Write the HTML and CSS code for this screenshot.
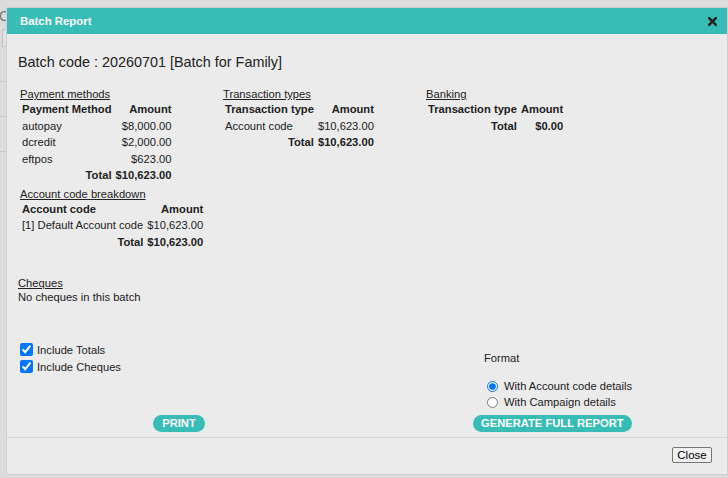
FILE: index.html
```html
<!DOCTYPE html>
<html lang="en">
<head>
  <meta charset="UTF-8" />
  <title>Batch Report</title>
  <link rel="stylesheet" href="styles.css">
</head>
<body>
  <!-- Page behind the dialog -->
  <div class="page">
    <div class="page-title">C</div>
    <div class="page-field"></div>
    <div class="page-row"></div>
    <div class="page-row"></div>
    <div class="page-row"></div>
  </div>

  <!-- Batch report dialog -->
  <div class="dialog">
    <div class="dialog-title">
      <span>Batch Report</span>
      <svg class="dialog-x" width="9" height="9" viewBox="0 0 9 9">
        <path d="M1.2 1.2 L7.8 7.8 M7.8 1.2 L1.2 7.8" stroke="#222" stroke-width="2.6" stroke-linecap="square"/>
      </svg>
    </div>

    <div class="dialog-body">
      <h3 class="batch-code">Batch code : 20260701 [Batch for Family]</h3>

      <div class="sections">
        <div class="section">
          <div class="section-title">Payment methods</div>
          <table class="report">
            <tr><th class="text">Payment Method</th><th>Amount</th></tr>
            <tr><td class="text">autopay</td><td>$8,000.00</td></tr>
            <tr><td class="text">dcredit</td><td>$2,000.00</td></tr>
            <tr><td class="text">eftpos</td><td>$623.00</td></tr>
            <tr class="total"><td>Total</td><td>$10,623.00</td></tr>
          </table>

          <div class="section-title sub">Account code breakdown</div>
          <table class="report">
            <tr><th class="text">Account code</th><th>Amount</th></tr>
            <tr><td class="text">[1] Default Account code</td><td>$10,623.00</td></tr>
            <tr class="total"><td>Total</td><td>$10,623.00</td></tr>
          </table>
        </div>

        <div class="section">
          <div class="section-title">Transaction types</div>
          <table class="report">
            <tr><th class="text">Transaction type</th><th>Amount</th></tr>
            <tr><td class="text">Account code</td><td>$10,623.00</td></tr>
            <tr class="total"><td>Total</td><td>$10,623.00</td></tr>
          </table>
        </div>

        <div class="section">
          <div class="section-title">Banking</div>
          <table class="report">
            <tr><th class="text">Transaction type</th><th>Amount</th></tr>
            <tr class="total"><td>Total</td><td>$0.00</td></tr>
          </table>
        </div>
      </div>

      <div class="cheques">
        <div class="section-title">Cheques</div>
        <div>No cheques in this batch</div>
      </div>

      <div class="options">
        <div class="options-left">
          <label class="check"><input type="checkbox" checked /> Include Totals</label>
          <label class="check"><input type="checkbox" checked /> Include Cheques</label>
        </div>
        <div class="options-right">
          <div class="format-label">Format</div>
          <label class="radio"><input type="radio" name="format" checked /> With Account code details</label>
          <label class="radio"><input type="radio" name="format" /> With Campaign details</label>
        </div>
        <button class="pill print-btn">PRINT</button>
        <button class="pill full-btn">GENERATE FULL REPORT</button>
      </div>
    </div>

    <div class="dialog-footer">
      <button class="close-btn">Close</button>
    </div>
  </div>
</body>
</html>
```

FILE: styles.css
```css
/* Global page styling */
html, body {
  margin: 0;
  padding: 0;
}

body {
  font-family: Arial, "Liberation Sans", sans-serif;
  font-size: 11.2px;
  color: #222;
  background: #dcdcdc;
  height: 478px;
  overflow: hidden;
}

/* Page behind the dialog */
.page {
  padding: 9px 0 0 0;
  color: #777;
}

.page-title {
  font-size: 14px;
  line-height: 14px;
  margin-left: -1px;
}

.page-field {
  width: 60px;
  height: 16px;
  margin: 6px 0 0 2px;
  border: 1px solid #c4c4c4;
  background: #e2e2e2;
}

.page-row {
  height: 34px;
  border-bottom: 1px solid #c9c9c9;
}

/* Dialog */
.dialog {
  position: absolute;
  left: 6px;
  top: 7px;
  width: 722px;
  height: 468px;
  box-sizing: border-box;
  border: 1px solid #cfcfcf;
  background: #ebebeb;
  display: flex;
  flex-direction: column;
}

.dialog-title {
  height: 26px;
  flex: none;
  background: #37bdb5;
  color: #fff;
  font-weight: bold;
  font-size: 11.4px;
  display: flex;
  align-items: center;
  justify-content: space-between;
  padding: 0 10px 0 13px;
}

.dialog-x {
  display: block;
}

.dialog-body {
  flex: 1;
  padding: 19px 11px 0 11px;
}

.batch-code {
  margin: 0 0 16px;
  font-size: 14.4px;
  font-weight: normal;
  line-height: 18px;
}

/* Report sections */
.sections {
  display: grid;
  grid-template-columns: 203px 203px 203px;
  align-items: start;
  padding-left: 2px;
}

.section-title {
  text-decoration: underline;
  line-height: 14px;
}

.section-title.sub {
  margin-top: 3px;
}

.report {
  border-collapse: collapse;
}

.report th,
.report td {
  padding: 1px 2px;
  line-height: 14.5px;
  font-size: 11.2px;
  text-align: right;
  white-space: nowrap;
}

.report th {
  font-weight: bold;
}

.report .text {
  text-align: left;
}

.report .total td {
  font-weight: bold;
}

.cheques {
  margin-top: 26px;
  line-height: 14px;
}

/* Options and actions */
.options {
  display: grid;
  grid-template-columns: 322px 1fr;
  column-gap: 133px;
  margin-top: 37px;
}

.options-left {
  padding-left: 2px;
}

.check,
.radio {
  display: flex;
  align-items: center;
  gap: 4px;
  height: 17px;
}

.radio {
  height: 16px;
}

.check input {
  margin: 0;
  width: 13px;
  height: 13px;
  accent-color: #0075ff;
}

.radio input {
  margin: 0 2px 0 0;
  width: 11px;
  height: 11px;
  accent-color: #0075ff;
}

.options-right {
  padding-top: 10px;
}

.format-label {
  padding-left: 11px;
  line-height: 14px;
  margin-bottom: 13px;
}

.options-right .radio {
  padding-left: 14px;
}

.pill {
  height: 17px;
  border: none;
  border-radius: 9px;
  background: #37bdb5;
  color: #fff;
  font-family: Arial, "Liberation Sans", sans-serif;
  font-weight: bold;
  font-size: 11.2px;
  padding: 0 8px;
  line-height: 17px;
  margin-top: 5px;
  cursor: pointer;
}

.print-btn {
  justify-self: center;
  padding: 0 9px;
}

.full-btn {
  justify-self: start;
}

/* Footer */
.dialog-footer {
  flex: none;
  height: 37px;
  box-sizing: border-box;
  border-top: 1px solid #d6d6d6;
  display: flex;
  justify-content: flex-end;
  align-items: flex-start;
  padding: 9px 15px 0 0;
}

.close-btn {
  width: 40px;
  height: 16px;
  padding: 0;
  font-family: Arial, "Liberation Sans", sans-serif;
  font-size: 11.5px;
  color: #000;
  background: #f0f0f0;
  border: 1px solid #767676;
  border-radius: 2px;
}
```
